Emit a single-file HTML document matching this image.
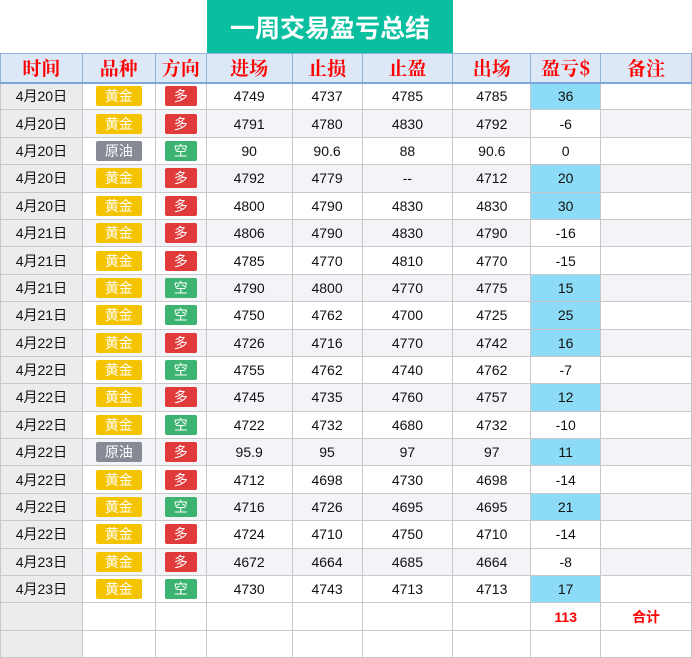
<!DOCTYPE html>
<html><head><meta charset="utf-8"><style>
*{margin:0;padding:0;box-sizing:border-box}
body{width:692px;height:658px;background:#fff;overflow:hidden;position:relative;font-family:"Liberation Sans","Noto Sans CJK SC",sans-serif}
.title{position:absolute;left:207px;top:0;width:246px;height:53px;background:#0abf9f;color:#fff;font-weight:bold;font-size:25px;text-align:center;line-height:54px;font-family:"Noto Sans CJK SC",sans-serif}
table{position:absolute;left:0;top:53px;border-collapse:collapse;table-layout:fixed}
td{border:1px solid #c8c8c8;text-align:center;font-size:14px;color:#111;height:27.4px;padding:0}
tr.h td{background:#dce8f5;color:#f00;font-family:"Noto Serif CJK SC",serif;font-weight:bold;font-size:19px;height:29px;border:1px solid #8fb4de;border-bottom:2px solid #7aa6d8}
tr.g td{background:#f3f4f8}
td.d{background:#ececec!important}
td.p{background:#8ddcf7!important}
.b{display:inline-block;color:#fff;font-size:14px;height:20px;line-height:20px;border-radius:2px;font-family:"Noto Sans CJK SC",sans-serif;vertical-align:middle}
.y{background:#f5c400;width:46px}.o{background:#868a94;width:46px}
.r{background:#e03a3a;width:32px}.gr{background:#3cb371;width:32px}
.t{color:#f00;font-weight:bold}
</style></head><body>
<div class="title">一周交易盈亏总结</div>
<table>
<colgroup><col style="width:82px"><col style="width:73px"><col style="width:51px"><col style="width:86px"><col style="width:70px"><col style="width:91px"><col style="width:78px"><col style="width:70px"><col style="width:91px"></colgroup>
<tr class="h"><td>时间</td><td>品种</td><td>方向</td><td>进场</td><td>止损</td><td>止盈</td><td>出场</td><td>盈亏$</td><td>备注</td></tr>
<tr><td class="d">4月20日</td><td><span class="b y">黄金</span></td><td><span class="b r">多</span></td><td>4749</td><td>4737</td><td>4785</td><td>4785</td><td class="p">36</td><td></td></tr>
<tr class="g"><td class="d">4月20日</td><td><span class="b y">黄金</span></td><td><span class="b r">多</span></td><td>4791</td><td>4780</td><td>4830</td><td>4792</td><td style="background:#fff">-6</td><td></td></tr>
<tr><td class="d">4月20日</td><td><span class="b o">原油</span></td><td><span class="b gr">空</span></td><td>90</td><td>90.6</td><td>88</td><td>90.6</td><td>0</td><td></td></tr>
<tr class="g"><td class="d">4月20日</td><td><span class="b y">黄金</span></td><td><span class="b r">多</span></td><td>4792</td><td>4779</td><td>--</td><td>4712</td><td class="p">20</td><td></td></tr>
<tr><td class="d">4月20日</td><td><span class="b y">黄金</span></td><td><span class="b r">多</span></td><td>4800</td><td>4790</td><td>4830</td><td>4830</td><td class="p">30</td><td></td></tr>
<tr class="g"><td class="d">4月21日</td><td><span class="b y">黄金</span></td><td><span class="b r">多</span></td><td>4806</td><td>4790</td><td>4830</td><td>4790</td><td style="background:#fff">-16</td><td></td></tr>
<tr><td class="d">4月21日</td><td><span class="b y">黄金</span></td><td><span class="b r">多</span></td><td>4785</td><td>4770</td><td>4810</td><td>4770</td><td>-15</td><td></td></tr>
<tr class="g"><td class="d">4月21日</td><td><span class="b y">黄金</span></td><td><span class="b gr">空</span></td><td>4790</td><td>4800</td><td>4770</td><td>4775</td><td class="p">15</td><td></td></tr>
<tr><td class="d">4月21日</td><td><span class="b y">黄金</span></td><td><span class="b gr">空</span></td><td>4750</td><td>4762</td><td>4700</td><td>4725</td><td class="p">25</td><td></td></tr>
<tr class="g"><td class="d">4月22日</td><td><span class="b y">黄金</span></td><td><span class="b r">多</span></td><td>4726</td><td>4716</td><td>4770</td><td>4742</td><td class="p">16</td><td></td></tr>
<tr><td class="d">4月22日</td><td><span class="b y">黄金</span></td><td><span class="b gr">空</span></td><td>4755</td><td>4762</td><td>4740</td><td>4762</td><td>-7</td><td></td></tr>
<tr class="g"><td class="d">4月22日</td><td><span class="b y">黄金</span></td><td><span class="b r">多</span></td><td>4745</td><td>4735</td><td>4760</td><td>4757</td><td class="p">12</td><td></td></tr>
<tr><td class="d">4月22日</td><td><span class="b y">黄金</span></td><td><span class="b gr">空</span></td><td>4722</td><td>4732</td><td>4680</td><td>4732</td><td>-10</td><td></td></tr>
<tr class="g"><td class="d">4月22日</td><td><span class="b o">原油</span></td><td><span class="b r">多</span></td><td>95.9</td><td>95</td><td>97</td><td>97</td><td class="p">11</td><td></td></tr>
<tr><td class="d">4月22日</td><td><span class="b y">黄金</span></td><td><span class="b r">多</span></td><td>4712</td><td>4698</td><td>4730</td><td>4698</td><td>-14</td><td></td></tr>
<tr class="g"><td class="d">4月22日</td><td><span class="b y">黄金</span></td><td><span class="b gr">空</span></td><td>4716</td><td>4726</td><td>4695</td><td>4695</td><td class="p">21</td><td></td></tr>
<tr><td class="d">4月22日</td><td><span class="b y">黄金</span></td><td><span class="b r">多</span></td><td>4724</td><td>4710</td><td>4750</td><td>4710</td><td>-14</td><td></td></tr>
<tr class="g"><td class="d">4月23日</td><td><span class="b y">黄金</span></td><td><span class="b r">多</span></td><td>4672</td><td>4664</td><td>4685</td><td>4664</td><td style="background:#fff">-8</td><td></td></tr>
<tr><td class="d">4月23日</td><td><span class="b y">黄金</span></td><td><span class="b gr">空</span></td><td>4730</td><td>4743</td><td>4713</td><td>4713</td><td class="p">17</td><td></td></tr>
<tr><td class="d"></td><td></td><td></td><td></td><td></td><td></td><td></td><td class="t">113</td><td class="t">合计</td></tr>
<tr><td class="d"></td><td></td><td></td><td></td><td></td><td></td><td></td><td></td><td></td></tr>
</table>
</body></html>
